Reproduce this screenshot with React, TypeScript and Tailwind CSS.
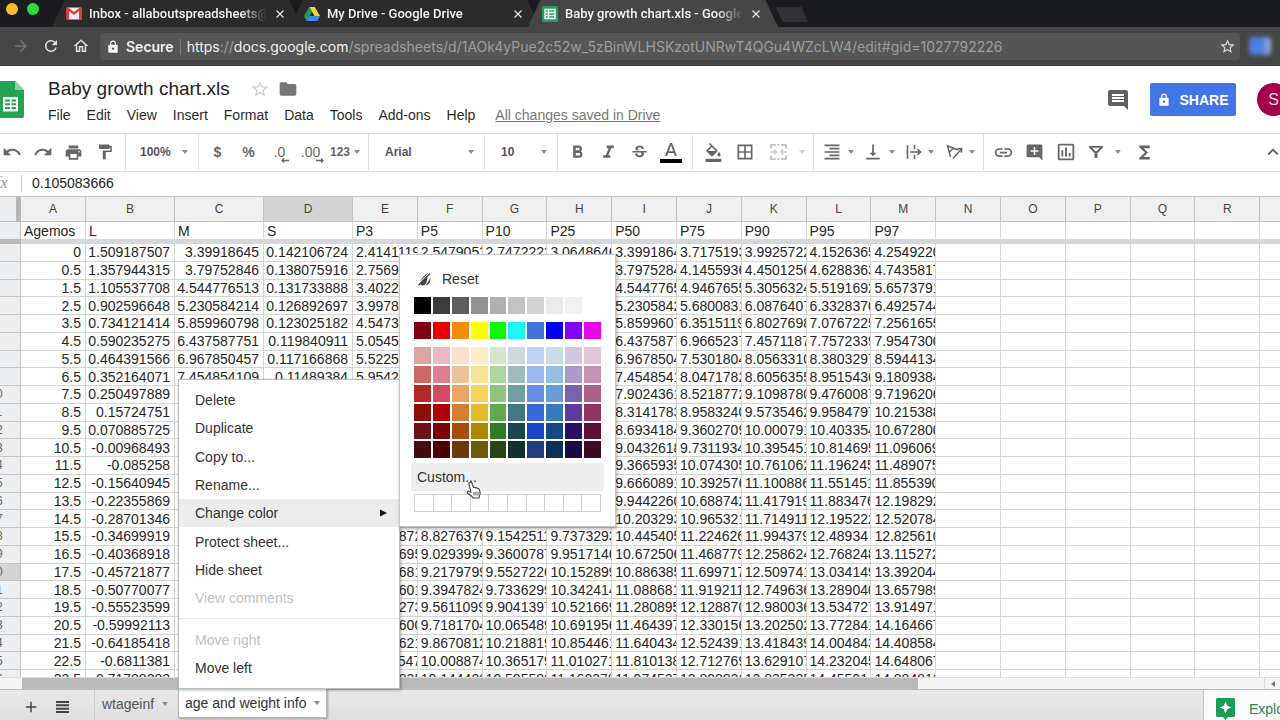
import React from "react";
import type { ReactNode } from "react";
import {
  MdAdd,
  MdAddComment,
  MdArrowForward,
  MdBorderAll,
  MdComment,
  MdFolder,
  MdFormatAlignRight,
  MdFormatBold,
  MdFormatColorFill,
  MdFormatItalic,
  MdFormatPaint,
  MdFunctions,
  MdInsertLink,
  MdKeyboardArrowUp,
  MdLock,
  MdOutlineHome,
  MdOutlineInsertChart,
  MdPrint,
  MdRedo,
  MdRefresh,
  MdStarBorder,
  MdStrikethroughS,
  MdUndo,
  MdVerticalAlignBottom,
} from "react-icons/md";

/* ---------- data ---------- */

const COLUMNS = "ABCDEFGHIJKLMNOPQRS".split("");
const TITLES = ["Agemos", "L", "M", "S", "P3", "P5", "P10", "P25", "P50", "P75", "P90", "P95", "P97"];

const ROWS: string[] = [
  "0|1.509187507|3.39918645|0.142106724|2.4141119|2.5479053|2.7472222|3.0648646|3.3991864|3.7175193|3.9925722|4.1526365|4.2549220",
  "0.5|1.357944315|3.79752846|0.138075916|2.7569173||||3.7975284|4.1455936|4.4501256|4.6288363|4.7435817",
  "1.5|1.105537708|4.544776513|0.131733888|3.4022929||||4.5447765|4.9467655|5.3056324|5.5191692|5.6573791",
  "2.5|0.902596648|5.230584214|0.126892697|3.9978064||||5.2305842|5.6800831|6.0876407|6.3328370|6.4925744",
  "3.5|0.734121414|5.859960798|0.123025182|4.5473833||||5.8599607|6.3515119|6.8027698|7.0767225|7.2561655",
  "4.5|0.590235275|6.437587751|0.119840911|5.0545394||||6.4375877|6.9665237|7.4571187|7.7572339|7.9547300",
  "5.5|0.464391566|6.967850457|0.117166868|5.5225001||||6.9678504|7.5301804|8.0563310|8.3803297|8.5944134",
  "6.5|0.352164071|7.454854109|0.11489384|5.9542727||||7.4548541|8.0471782|8.6056355|8.9515436|9.1809384",
  "7.5|0.250497889|||||||7.9024361|8.5218772|9.1098780|9.4760087|9.7196206",
  "8.5|0.15724751|||||||8.3141783|8.9583240|9.5735462|9.9584797|10.215388",
  "9.5|0.070885725|||||||8.6934184|9.3602709|10.000791|10.403354|10.672800",
  "10.5|-0.00968493|||||||9.0432618|9.7311934|10.395451|10.814695|11.096069",
  "11.5|-0.085258|||||||9.3665935|10.074305|10.761062|11.196245|11.489075",
  "12.5|-0.15640945|||||||9.6660891|10.392576|11.100886|11.551451|11.855390",
  "13.5|-0.22355869|||||||9.9442260|10.688742|11.417919|11.883476|12.198292",
  "14.5|-0.28701346|||||||10.203293|10.965321|11.714911|12.195222|12.520784",
  "15.5|-0.34699919|||8.3800872|8.8276376|9.1542511|9.7373293|10.445405|11.224626|11.994379|12.48934|12.825610",
  "16.5|-0.40368918|||8.5754695|9.0293994|9.3600787|9.9517146|10.672506|11.468779|12.258624|12.768248|13.115272",
  "17.5|-0.45721877|||8.7579681|9.2179799|9.5527226|10.152899|10.886385|11.699717|12.509741|13.034149|13.392044",
  "18.5|-0.50770077|||8.9286601|9.3947824|9.7336299|10.342414|11.088681|11.919211|12.749636|13.289040|13.657989",
  "19.5|-0.55523599|||9.0885273|9.5611099|9.9041397|10.521669|11.280895|12.128870|12.980036|13.534727|13.914971",
  "20.5|-0.59992113|||9.2384600|9.7181704|10.065489|10.691956|11.464397|12.330156|13.202502|13.772841|14.164667",
  "21.5|-0.64185418|||9.3792621|9.8670812|10.218819|10.854461|11.640434|12.524391|13.418439|14.004843|14.408584",
  "22.5|-0.6811381|||9.5116547|10.008874|10.365179|11.010271|11.810138|12.712769|13.629107|14.232045|14.648067",
  "23.5|-0.71788283|||9.6362835|10.144408|10.505580|11.160378|11.974537|12.898836|13.835335|14.45591|14.884812",
];

const GRAYS = [
  "bg-[#000000]", "bg-[#3c3c3c]", "bg-[#5e5e5e]", "bg-[#929292]", "bg-[#b0b0b0]",
  "bg-[#c3c3c3]", "bg-[#d2d2d2]", "bg-[#ebebeb]", "bg-[#f1f1f1]", "bg-[#ffffff]",
];
const BRIGHTS = [
  "bg-[#7e0010]", "bg-[#e60006]", "bg-[#f68a0b]", "bg-[#ffff00]", "bg-[#12f704]",
  "bg-[#1af7fb]", "bg-[#4274dc]", "bg-[#0202ec]", "bg-[#7e06f4]", "bg-[#e705ec]",
];
const SHADES = [
  "bg-[#dba5a2]", "bg-[#ebb9c4]", "bg-[#fae0cd]", "bg-[#fdedc9]", "bg-[#d3e6cb]", "bg-[#cbd9db]", "bg-[#c0d1f8]", "bg-[#c9dae8]", "bg-[#d0c8e0]", "bg-[#e3c6d6]",
  "bg-[#cb6b66]", "bg-[#dc7f92]", "bg-[#eec294]", "bg-[#f8e294]", "bg-[#aed69e]", "bg-[#9dbcc0]", "bg-[#9cb6f2]", "bg-[#95bfe2]", "bg-[#aa98ce]", "bg-[#c892b4]",
  "bg-[#b32a25]", "bg-[#cf4b62]", "bg-[#eba464]", "bg-[#fad35c]", "bg-[#8dc479]", "bg-[#6f9fa1]", "bg-[#678fe4]", "bg-[#699ed4]", "bg-[#7b62ae]", "bg-[#ad5f8b]",
  "bg-[#8e0d07]", "bg-[#b00007]", "bg-[#d67d32]", "bg-[#e4b92c]", "bg-[#61a84c]", "bg-[#44777e]", "bg-[#3968d2]", "bg-[#3979bd]", "bg-[#5f3aa0]", "bg-[#923563]",
  "bg-[#6e1015]", "bg-[#7b0006]", "bg-[#a84d0e]", "bg-[#b18606]", "bg-[#317c20]", "bg-[#1a464e]", "bg-[#1b43c6]", "bg-[#16498a]", "bg-[#290e66]", "bg-[#5f0e38]",
  "bg-[#450c0e]", "bg-[#4f0006]", "bg-[#6c390a]", "bg-[#6f5c07]", "bg-[#264616]", "bg-[#12302f]", "bg-[#213a80]", "bg-[#0c3158]", "bg-[#1d0a42]", "bg-[#3e0a26]",
];

/* ---------- small parts ---------- */

function Caret({ className = "text-[#8a8a8a]" }: { className?: string }) {
  return (
    <svg viewBox="0 0 6 4" className={`h-[4px] w-[6px] shrink-0 ${className}`} aria-hidden="true">
      <path d="M0 0h6L3 4z" fill="currentColor" />
    </svg>
  );
}

function Tool({ label, wide, children }: { label: string; wide?: boolean; children: ReactNode }) {
  return (
    <button
      type="button"
      aria-label={label}
      className={`flex h-full shrink-0 items-center justify-center ${wide ? "w-[41px] gap-1.5" : "w-[31px]"}`}
    >
      {children}
    </button>
  );
}

function Picker({ label, value, className }: { label: string; value: string; className: string }) {
  return (
    <label className={`flex h-full shrink-0 items-center border-r border-[#dedede] pr-2.5 ${className}`}>
      <select
        aria-label={label}
        defaultValue={value}
        className="min-w-0 flex-1 appearance-none bg-transparent text-xs font-bold text-[#555] outline-none"
      >
        <option>{value}</option>
      </select>
      <Caret />
    </label>
  );
}

/* ---------- browser chrome ---------- */

function BrowserTab({ title, icon, active }: { title: string; icon: ReactNode; active?: boolean }) {
  return (
    <div
      className={`-mr-3 flex h-full w-[250px] shrink-0 items-center gap-[7px] pr-4 pl-3.5 [clip-path:polygon(5%_0,95%_0,100%_100%,0_100%)] ${
        active ? "z-10 bg-[#464646]" : "bg-[#2b2b2b]"
      }`}
    >
      {icon}
      <span className="min-w-0 flex-1 overflow-hidden font-[Roboto,sans-serif] text-[13px] font-medium whitespace-nowrap text-[#f2f2f2] [mask-image:linear-gradient(to_right,black_85%,transparent)]">
        {title}
      </span>
      <button type="button" aria-label={`Close ${title}`} className="flex w-3 justify-center">
        <svg viewBox="0 0 8 8" className="h-2 w-2" stroke="#e0e0e0" strokeWidth="1.3">
          <path d="M.5.5l7 7M7.5.5l-7 7" />
        </svg>
      </button>
    </div>
  );
}

function BrowserChrome() {
  return (
    <div className="font-[Inter,sans-serif]">
      <div className="flex h-[27px] bg-[#1b1c20]">
        <div className="flex w-[52px] shrink-0 gap-[9px] pt-[3px] pl-[6px]">
          <span className="h-3 w-3 rounded-full bg-[#fcbb2d]" />
          <span className="h-3 w-3 rounded-full bg-[#2fd83b]" />
        </div>
        <BrowserTab
          title="Inbox - allaboutspreadsheets@"
          icon={
            <svg viewBox="0 0 16 13" className="h-[13px] w-4 shrink-0">
              <rect x=".5" y=".5" width="15" height="12" rx="1" fill="#f3e9e9" />
              <path d="M0 1.5V12a1 1 0 001 1h2V4l5 4 5-4v9h2a1 1 0 001-1V1.500L14.500 0 8 5 1.500 0z" fill="#dc3c40" />
            </svg>
          }
        />
        <BrowserTab
          title="My Drive - Google Drive"
          icon={
            <svg viewBox="0 0 16 14" className="h-[14px] w-4 shrink-0">
              <path d="M5.300 0h5.400L16 9h-5.400z" fill="#fccf38" />
              <path d="M5.300 0L8 4.600 2.700 14 0 9z" fill="#17a05e" />
              <path d="M5.400 9H16l-2.700 5H2.700z" fill="#4587f0" />
            </svg>
          }
        />
        <BrowserTab
          active
          title="Baby growth chart.xls - Google Sheets"
          icon={
            <svg viewBox="0 0 16 16" className="h-4 w-4 shrink-0">
              <rect width="16" height="16" rx="1.500" fill="#1fa35a" />
              <path d="M3 3.500h10v9H3zM3 6.500h10M3 9.500h10M6.500 3.500v9" fill="none" stroke="#fff" strokeWidth="1.300" />
            </svg>
          }
        />
        <button
          type="button"
          aria-label="New tab"
          className="mt-[7px] ml-2.5 h-[15px] w-8 bg-[#313133] [clip-path:polygon(0_0,80%_0,100%_100%,20%_100%)]"
        />
      </div>

      <div className="flex h-[39px] items-center border-b border-[#3c3c3c] bg-[#464646] text-[#dcdcdc]">
        <div className="flex w-[100px] shrink-0 items-center gap-3 pl-3">
          <button type="button" aria-label="Forward" className="text-[#747474]">
            <MdArrowForward size={18} />
          </button>
          <button type="button" aria-label="Reload">
            <MdRefresh size={18} />
          </button>
          <button type="button" aria-label="Home">
            <MdOutlineHome size={18} />
          </button>
        </div>
        <div className="flex h-[27px] min-w-0 flex-1 items-center rounded-sm bg-[#555] pt-px pr-1 pl-1.5 text-sm whitespace-nowrap">
          <MdLock size={14} className="shrink-0 text-white" />
          <span className="ml-1.5 font-semibold text-[#f0f0f0]">Secure</span>
          <span className="mx-1.5 h-4 w-px bg-[#7a7a7a]" />
          <span className="min-w-0 flex-1 overflow-hidden text-[#9d9d9d]">
            <span className="text-[#f0f0f0]">https</span>://<span className="text-[#f0f0f0]">docs.google.com</span>
            /spreadsheets/d/1AOk4yPue2c52w_5zBinWLHSKzotUNRwT4QGu4WZcLW4/edit#gid=1027792226
          </span>
          <button type="button" aria-label="Bookmark this page">
            <MdStarBorder size={17} />
          </button>
        </div>
        <div className="flex w-10 shrink-0 justify-center">
          <span className="h-[18px] w-[22px] rounded-sm bg-linear-to-r from-[#4d7fdc] from-60% to-[#9fb9e6] blur-[2px]" />
        </div>
      </div>
    </div>
  );
}

/* ---------- document header ---------- */

function DocHeader() {
  const menus = ["File", "Edit", "View", "Insert", "Format", "Data", "Tools", "Add-ons", "Help"];
  return (
    <header className="flex h-[67px] shrink-0 items-start">
      <a href="#home" aria-label="Sheets home" className="mt-[15px] -ml-[6px] shrink-0">
        <svg viewBox="0 0 30 37" className="h-[37px] w-[30px]">
          <path d="M0 2a2 2 0 012-2h19l9 9v26a2 2 0 01-2 2H2a2 2 0 01-2-2z" fill="#23a455" />
          <path d="M21 0l9 9h-9z" fill="#8ed1a9" />
          <path d="M9 16h15v14.500H9z" fill="#f2faf5" />
          <path d="M11 18.500h5v2h-5zM17.500 18.500h4.500v2h-4.500zM11 22.300h5v2h-5zM17.500 22.300h4.500v2h-4.500zM11 26h5v2h-5zM17.500 26h4.500v2h-4.500z" fill="#23a455" />
        </svg>
      </a>
      <div className="min-w-0 flex-1 pl-6">
        <div className="mt-[9px] flex h-7 items-center">
          <h1 className="text-[19px] text-[#222]">Baby growth chart.xls</h1>
          <button type="button" aria-label="Star" className="ml-5 text-[#d0d0d0]">
            <MdStarBorder size={20} />
          </button>
          <button type="button" aria-label="Move to folder" className="ml-2 text-[#757575]">
            <MdFolder size={20} />
          </button>
        </div>
        <nav className="flex h-6 items-center gap-4 text-sm text-[#2a2a2a]">
          {menus.map((m) => (
            <button key={m} type="button">
              {m}
            </button>
          ))}
          <a href="#history" className="ml-1 text-[#777] underline">
            All changes saved in Drive
          </a>
        </nav>
      </div>
      <div className="mt-[17px] flex items-center">
        <button type="button" aria-label="Comments" className="mr-5 text-[#616161]">
          <MdComment size={24} />
        </button>
        <button
          type="button"
          className="flex h-[33px] w-[86px] items-center justify-center gap-2 rounded-xs bg-[#4076e8] text-sm font-bold text-white"
        >
          <MdLock size={14} />
          SHARE
        </button>
        <button
          type="button"
          aria-label="Account"
          className="-mr-[10px] ml-[21px] h-[33px] w-[33px] rounded-full bg-[#a6004c] text-base text-[#f4d9e5]"
        >
          S
        </button>
      </div>
    </header>
  );
}

/* ---------- toolbar ---------- */

function Decimals({ text, flip }: { text: string; flip?: boolean }) {
  return (
    <span className="flex flex-col items-end pt-1 text-sm leading-3">
      {text}
      <svg viewBox="0 0 8 5" className="-mr-1 h-[5px] w-2" fill="none" stroke="currentColor" strokeWidth="1.400">
        <path d={flip ? "M0 2.500h7M5 .5l2 2-2 2" : "M8 2.500H1M3 .5l-2 2 2 2"} />
      </svg>
    </span>
  );
}

function Toolbar() {
  const group = "flex h-full shrink-0 items-center border-r border-[#dedede]";
  return (
    <div
      role="toolbar"
      aria-label="Formatting"
      className="flex h-[39px] shrink-0 items-center overflow-hidden border-y border-[#dedede] pb-px text-[#666]"
    >
      <div className={`${group} -ml-1 w-[130px]`}>
        <Tool label="Undo"><MdUndo size={20} /></Tool>
        <Tool label="Redo"><MdRedo size={20} /></Tool>
        <Tool label="Print"><MdPrint size={19} /></Tool>
        <Tool label="Paint format"><MdFormatPaint size={18} /></Tool>
      </div>
      <Picker label="Zoom" value="100%" className="w-[73px] pl-3.5" />
      <div className={`${group} w-[170px] pl-[3px] text-sm font-bold`}>
        <Tool label="Currency">$</Tool>
        <Tool label="Percent">%</Tool>
        <Tool label="Fewer decimals">
          <span className="font-normal"><Decimals text=".0" /></span>
        </Tool>
        <Tool label="More decimals">
          <span className="font-normal"><Decimals text=".00" flip /></span>
        </Tool>
        <button type="button" className="flex h-full items-center gap-1 pl-1 text-xs">
          123
          <Caret />
        </button>
      </div>
      <Picker label="Font" value="Arial" className="w-[116px] pl-4" />
      <Picker label="Font size" value="10" className="w-[73px] pl-4" />
      <div className={`${group} w-[135px] pl-1`}>
        <Tool label="Bold"><MdFormatBold size={21} /></Tool>
        <Tool label="Italic"><MdFormatItalic size={21} /></Tool>
        <Tool label="Strikethrough"><MdStrikethroughS size={19} /></Tool>
        <Tool label="Text color">
          <svg viewBox="0 0 22 22" className="h-[22px] w-[22px]">
            <path d="M10 2L5 15h2.100l1.100-3h5.600l1.100 3H17L12 2zm-1.100 8.200L11 4.300l2.100 5.900z" fill="currentColor" />
            <path d="M0 18h22v4H0z" fill="#000" />
          </svg>
        </Tool>
      </div>
      <div className={`${group} w-[121px] pl-[5px]`}>
        <Tool label="Fill color"><MdFormatColorFill size={19} /></Tool>
        <Tool label="Borders"><MdBorderAll size={20} /></Tool>
        <button type="button" disabled aria-label="Merge cells" className="flex h-full items-center gap-3 pl-2.5 text-[#c9c9c9]">
          <svg viewBox="0 0 17 16" className="h-4 w-[17px]" fill="none" stroke="currentColor" strokeWidth="2">
            <path d="M6 1H1v3.500M11 1h5v3.500M6 15H1v-3.500M11 15h5v-3.500M7.500 1h2M7.500 15h2" />
            <path d="M0 8h5M17 8h-5M4 5.500L6.500 8 4 10.500M13 5.500L10.500 8l2.500 2.500" strokeWidth="1.500" />
          </svg>
          <Caret className="text-[#d0d0d0]" />
        </button>
      </div>
      <div className={`${group} w-[170px] pl-[3px]`}>
        <Tool label="Horizontal align" wide><MdFormatAlignRight size={20} /><Caret /></Tool>
        <Tool label="Vertical align" wide><MdVerticalAlignBottom size={20} /><Caret /></Tool>
        <Tool label="Text wrapping" wide>
          <svg viewBox="0 0 16 16" className="h-4 w-4" fill="none" stroke="currentColor" strokeWidth="1.600">
            <path d="M1.500 1v14M8.500 1v4M8.500 11v4M4 8h10M11.500 5.200L14.500 8l-3 2.800" />
          </svg>
          <Caret />
        </Tool>
        <Tool label="Text rotation" wide>
          <svg viewBox="0 0 17 16" className="h-4 w-[17px]" fill="none" stroke="currentColor" strokeWidth="1.500">
            <path d="M4.500 13L1.500 1.800 12 6M3.300 8.200L7.300 4.200M7 14.500L15.500 5M11.500 4.700l4.200-.2-.2 4.200" />
          </svg>
          <Caret />
        </Tool>
      </div>
      <div className="flex h-full items-center pl-1">
        <Tool label="Insert link"><MdInsertLink size={21} /></Tool>
        <Tool label="Insert comment"><MdAddComment size={19} /></Tool>
        <Tool label="Insert chart"><MdOutlineInsertChart size={22} /></Tool>
        <button type="button" aria-label="Filter" className="flex h-full w-12 items-center gap-3 pl-2">
          <svg viewBox="0 0 14 14" className="h-3.5 w-3.5" fill="currentColor">
            <path d="M0 1h14v1.500L8.500 8v5h-3V8L0 2.500zM3 2.700L6.600 6.300h.8L11 2.700z" fillRule="evenodd" />
          </svg>
          <Caret />
        </button>
        <Tool label="Functions"><MdFunctions size={21} /></Tool>
      </div>
      <button type="button" aria-label="Hide menus" className="-mr-1 ml-auto">
        <MdKeyboardArrowUp size={22} />
      </button>
    </div>
  );
}

function FormulaBar() {
  return (
    <label className="flex h-[25px] shrink-0 items-start border-b border-[#c4c4c4] pt-[3px]">
      <span className="-ml-1 w-[25px] font-['Liberation_Serif',serif] text-base leading-4 text-[#999] italic">fx</span>
      <span className="h-[17px] w-px bg-[#cfcfcf]" />
      <input
        aria-label="Formula"
        defaultValue="0.105083666"
        className="ml-2.5 h-4 min-w-0 flex-1 text-sm text-[#222] outline-none"
      />
    </label>
  );
}

/* ---------- grid ---------- */

const cellBase = "overflow-hidden border-r border-b border-[#d4d4d4] whitespace-nowrap p-0";

function Grid() {
  return (
    <div className="min-h-0 flex-1 overflow-hidden">
      <table className="-ml-6 h-[491px] w-[1349px] table-fixed border-separate border-spacing-0 text-sm leading-4 text-[#262626]">
        <colgroup>
          <col className="w-[45px]" />
          <col className="w-[65px]" />
          <col className="w-[89px]" />
          <col className="w-[89px]" />
          <col className="w-[89px]" />
          {COLUMNS.slice(4).map((c) => (
            <col key={c} />
          ))}
        </colgroup>
        <thead>
          <tr className="h-[25px]">
            <td className="border-r-5 border-b border-[#b7b7b7] bg-[#eceef0] p-0" />
            {COLUMNS.map((c) => (
              <th
                key={c}
                scope="col"
                className={`border-r border-b border-[#c2c2c2] p-0 text-xs font-normal text-[#444] ${
                  c === "D" ? "bg-[#d4d4d4]" : "bg-[#efefef]"
                }`}
              >
                {c === "S" ? "" : c}
              </th>
            ))}
          </tr>
          <tr className="h-[17px]">
            <td className="border-r border-[#c4c4c4] bg-[#eceef0] p-0" />
            {COLUMNS.map((c, i) => (
              <td key={c} className="overflow-hidden border-r border-[#d4d4d4] p-0 pl-[3px]">
                {TITLES[i]}
              </td>
            ))}
          </tr>
          <tr className="h-[5px]">
            <td className="bg-[#b9b9b9] p-0" />
            <td colSpan={19} className="bg-[#d6d7db] p-0" />
          </tr>
        </thead>
        <tbody>
          {ROWS.map((row, r) => {
            const cells = row.split("|");
            const num = r + 2;
            return (
              <tr key={num}>
                <th
                  scope="row"
                  className={`overflow-hidden border-r border-b border-[#c4c4c4] p-0 pr-[4px] text-xs leading-4 font-normal text-[#666] ${
                    num === 20 ? "bg-[#d4d4d4]" : "bg-[#eceef0]"
                  }`}
                >
                  {num}
                </th>
                {COLUMNS.map((c, i) => (
                  <td key={c} className={`${cellBase} ${i < 4 ? "pr-1 text-right" : "pl-[3px]"}`}>
                    {cells[i] ?? ""}
                  </td>
                ))}
              </tr>
            );
          })}
        </tbody>
      </table>
    </div>
  );
}

/* ---------- menus ---------- */

function Swatches({ colors, className }: { colors: string[]; className: string }) {
  return (
    <div className={`grid grid-cols-10 gap-[2px] ${className}`}>
      {colors.map((c, i) => (
        <button key={i} type="button" aria-label={c.slice(4, -1)} className={c} />
      ))}
    </div>
  );
}

function ColorMenu() {
  return (
    <div className="h-[273px] w-[217px] border border-[#c6c6c6] bg-white px-3.5 pt-2.5 text-[#333] shadow-[1px_2px_4px_rgba(0,0,0,0.3)]">
      <button type="button" className="flex h-7 w-full items-center gap-[11px] pl-1">
        <svg viewBox="0 0 13 14" className="h-3.5 w-[13px]">
          <path d="M9.500 1C6 4 2 7.500 1.800 10.500c0 1.800 1.200 3 3 3C8.500 13.500 9.500 8 9.500 1z" fill="#444" />
          <path d="M12.300 5.500c.3 4-.8 7.500-4.800 8C9.500 11 10.800 9 12.300 5.500z" fill="#444" />
          <path d="M0 12L11.500 1" stroke="#fff" strokeWidth="1.200" />
          <path d="M.5 13.200L12 1.500" stroke="#444" strokeWidth="1.300" />
        </svg>
        Reset
      </button>
      <Swatches colors={GRAYS} className="mt-1 h-[17px]" />
      <Swatches colors={BRIGHTS} className="mt-2 h-[17px]" />
      <Swatches colors={SHADES} className="mt-2 h-[111px] grid-rows-6" />
      <div className="relative -mx-[3px] mt-[5px]">
        <button type="button" className="flex h-7 w-full items-center rounded-xs bg-[#eee] pb-px pl-1.5">
          Custom...
        </button>
        <svg viewBox="0 0 16 18" className="absolute top-[18px] left-[55px] z-10 h-[18px] w-4">
          <path
            d="M4.200 1.200c.9-.3 1.500.2 1.800 1l1.500 4.300c.6-.5 1.600-.3 1.900.4.700-.5 1.600-.2 1.900.5.800-.3 1.600.1 1.900.9l.9 3c.4 1.500-.1 2.800-.8 4L13 17H7l-1-1.500-4.300-3.200c-1-.9-.1-2.300 1.200-1.900l2 .8L3 3c-.3-.8.300-1.500 1.200-1.800z"
            fill="#fff"
            stroke="#444"
            strokeWidth="1.100"
          />
          <path d="M8 11v3.500M10 11v3.500M12 11v3.500" stroke="#444" strokeWidth=".9" />
        </svg>
      </div>
      <div className="mt-[3px] grid h-[18px] grid-cols-10 border-y border-l border-[#cfcfcf]">
        {Array.from({ length: 10 }, (_, i) => (
          <button key={i} type="button" aria-label={`Custom color ${i + 1}`} className="border-r border-[#cfcfcf]" />
        ))}
      </div>
    </div>
  );
}

function Entry({ children, disabled }: { children: string; disabled?: boolean }) {
  return (
    <button
      type="button"
      role="menuitem"
      disabled={disabled}
      className={`flex w-full flex-1 items-center pl-4 ${disabled ? "text-[#c0c0c0]" : ""}`}
    >
      {children}
    </button>
  );
}

function SheetMenu() {
  return (
    <div
      role="menu"
      className="absolute bottom-full -left-px flex h-[310px] w-[222px] flex-col border border-[#bdbdbd] bg-white py-1.5 text-[#333] shadow-[1px_1px_3px_rgba(0,0,0,0.35)]"
    >
      <Entry>Delete</Entry>
      <Entry>Duplicate</Entry>
      <Entry>Copy to...</Entry>
      <Entry>Rename...</Entry>
      <div className="relative flex flex-1 flex-col">
        <button
          type="button"
          role="menuitem"
          aria-haspopup="true"
          className="flex w-full flex-1 items-center justify-between bg-[#ececec] pr-3 pl-4"
        >
          Change color
          <svg viewBox="0 0 7 8" className="h-2 w-[7px]">
            <path d="M0 .5L7 4 0 7.500z" fill="#111" />
          </svg>
        </button>
        <div className="absolute -top-[245px] left-full">
          <ColorMenu />
        </div>
      </div>
      <Entry>Protect sheet...</Entry>
      <Entry>Hide sheet</Entry>
      <Entry disabled>View comments</Entry>
      <hr className="my-1.5 border-[#e6e6e6]" />
      <Entry disabled>Move right</Entry>
      <Entry>Move left</Entry>
    </div>
  );
}

/* ---------- bottom ---------- */

function BottomBar() {
  return (
    <footer className="shrink-0">
      <div className="flex h-3 border-t border-[#ddd] bg-[#f4f4f4]">
        <div className="ml-[22px] w-[70%] bg-[#bababa]" />
        <button type="button" aria-label="Scroll left" className="ml-auto flex w-4 items-center justify-center border-l border-[#ddd]">
          <svg viewBox="0 0 4 6" className="h-1.5 w-1">
            <path d="M4 0v6L0 3z" fill="#777" />
          </svg>
        </button>
      </div>
      <div className="flex h-[31px] border-t border-[#bbb] bg-linear-to-b from-[#e8e8e8] to-[#dfdfdf] text-sm">
        <div className="flex w-[94px] items-center gap-4 pt-1 pl-[22px] text-[#444]">
          <button type="button" aria-label="Add sheet"><MdAdd size={18} /></button>
          <button type="button" aria-label="All sheets">
            <svg viewBox="0 0 13 12" className="h-3 w-[13px]" stroke="currentColor" strokeWidth="2">
              <path d="M0 1h13M0 4.300h13M0 7.700h13M0 11h13" />
            </svg>
          </button>
        </div>
        <button type="button" className="flex w-[84px] items-center justify-between border-l border-[#ccc] pr-2.5 pb-0.5 pl-[7px] text-[#555]">
          wtageinf
          <Caret />
        </button>
        <div className="relative -mt-px mb-0.5 w-[149px] border-x border-b border-[#b5b5b5] bg-white shadow-[1px_1px_2px_rgba(0,0,0,0.3)]">
          <button type="button" className="flex h-full w-full items-center justify-between px-1.5 pb-px whitespace-nowrap text-[#333]">
            age and weight info
            <Caret />
          </button>
          <SheetMenu />
        </div>
        <button
          type="button"
          className="-mr-5 ml-auto flex w-[97px] items-center gap-3.5 border-l border-[#c4c4c4] bg-[#fafafa] pt-2 pl-3 text-[#2f8553]"
        >
          <svg viewBox="0 0 19 22" className="h-[22px] w-[19px] shrink-0">
            <path d="M1.500 0h16A1.500 1.500 0 0119 1.500v16a1.500 1.500 0 01-1.500 1.500H12l-2.500 3L7 19H1.500A1.500 1.500 0 010 17.500v-16A1.500 1.500 0 011.500 0z" fill="#1b9c57" />
            <path d="M9.500 3.500l1.700 4.300 4.300 1.700-4.300 1.700-1.700 4.300-1.700-4.300-4.300-1.700 4.300-1.700z" fill="#fff" />
          </svg>
          Explore
        </button>
      </div>
    </footer>
  );
}

export default function App() {
  return (
    <div className="flex h-screen flex-col overflow-hidden bg-white font-['Liberation_Sans',Arial,sans-serif]">
      <BrowserChrome />
      <DocHeader />
      <Toolbar />
      <FormulaBar />
      <Grid />
      <BottomBar />
    </div>
  );
}
